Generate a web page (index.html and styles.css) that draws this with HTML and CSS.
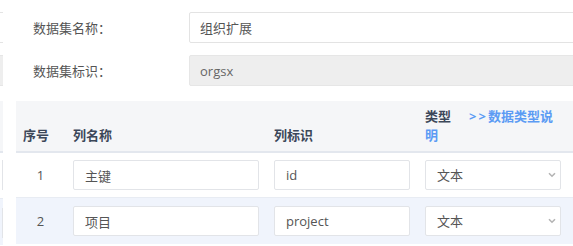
FILE: index.html
```html
<!DOCTYPE html>
<html lang="zh-CN">
<head>
<meta charset="utf-8">
<title>数据集</title>
<link rel="stylesheet" href="styles.css">
</head>
<body>
<div class="page">
  <div class="strip">
    <div class="s-gap12"></div>
    <div class="s-input"></div>
    <div class="s-gap12"></div>
    <div class="s-disabled"></div>
    <div class="s-gap15"></div>
    <div class="s-head"></div>
    <div class="s-row"><div class="s-edge"></div></div>
    <div class="s-row s-alt"><div class="s-edge"></div></div>
  </div>
  <div class="main">
    <div class="meta">
      <div class="field">
        <label class="field-label">数据集名称：</label>
        <input class="field-input" type="text" value="组织扩展">
      </div>
      <div class="field">
        <label class="field-label">数据集标识：</label>
        <input class="field-input is-disabled" type="text" value="orgsx" disabled>
      </div>
    </div>
    <div class="grid">
      <div class="grid-head">
        <div class="hcell c-no">序号</div>
        <div class="hcell c-name">列名称</div>
        <div class="hcell c-id">列标识</div>
        <div class="hcell c-type"><span class="type-label">类型</span><a class="type-link"><span class="arrows">&gt;&gt;</span>数据类型说<br>明</a></div>
      </div>
      <div class="grid-row">
        <div class="cell c-no num">1</div>
        <div class="cell c-name"><input class="cell-input w-name" type="text" value="主键"></div>
        <div class="cell c-id"><input class="cell-input w-id" type="text" value="id"></div>
        <div class="cell c-type">
          <div class="select-wrap">
            <select class="cell-select"><option>文本</option></select>
            <svg class="chev" width="8" height="6" viewBox="0 0 8 6"><path d="M1 1.2 L4 4.2 L7 1.2" fill="none" stroke="#b4b4b4" stroke-width="1.6"/></svg>
          </div>
        </div>
      </div>
      <div class="grid-row alt">
        <div class="cell c-no num">2</div>
        <div class="cell c-name"><input class="cell-input w-name" type="text" value="项目"></div>
        <div class="cell c-id"><input class="cell-input w-id" type="text" value="project"></div>
        <div class="cell c-type">
          <div class="select-wrap">
            <select class="cell-select"><option>文本</option></select>
            <svg class="chev" width="8" height="6" viewBox="0 0 8 6"><path d="M1 1.2 L4 4.2 L7 1.2" fill="none" stroke="#b4b4b4" stroke-width="1.6"/></svg>
          </div>
        </div>
      </div>
    </div>
  </div>
</div>
</body>
</html>
```
FILE: styles.css
```css
* { box-sizing: border-box; }
html, body {
  margin: 0;
  padding: 0;
  background: #ffffff;
  overflow: hidden;
}
body {
  font-family: "Open Sans", "Noto Sans CJK SC", sans-serif;
  font-size: 13px;
  color: #555;
  width: 573px;
  height: 246px;
}
.page {
  display: flex;
  width: 573px;
  height: 246px;
  overflow: hidden;
}

/* left clipped strip */
.strip {
  width: 3px;
  flex: 0 0 3px;
  display: flex;
  flex-direction: column;
}
.s-gap12 { height: 12px; }
.s-gap15 { height: 15px; }
.s-input {
  height: 31px;
  border-top: 1px solid #e4e4e4;
  border-bottom: 1px solid #e4e4e4;
}
.s-disabled {
  height: 31px;
  background: #eeeeee;
  border-top: 1px solid #e6e6e6;
  border-bottom: 1px solid #e6e6e6;
}
.s-head {
  height: 52px;
  background: #f5f6f8;
  border-bottom: 2px solid #e3e7ee;
}
.s-row {
  height: 46px;
  padding-top: 7px;
  border-bottom: 1px solid #e8ecf3;
}
.s-alt { background: #f0f4fc; border-bottom: 0; padding-top: 9px; }
.s-edge {
  width: 3px;
  height: 30px;
  border-right: 1px solid #e2e4e8;
}

/* main */
.main {
  flex: 1 1 auto;
  min-width: 0;
}
.meta {
  padding-top: 12px;
}
.field {
  display: flex;
  align-items: center;
  height: 31px;
  margin-bottom: 12px;
}
.field + .field { margin-bottom: 15px; }
.field-label {
  width: 186px;
  flex: 0 0 186px;
  padding-left: 30px;
  color: #555;
  font-size: 13px;
}
.field-input {
  flex: 0 0 420px;
  height: 31px;
  border: 1px solid #e3e3e3;
  border-radius: 2px;
  padding: 0 10px;
  font-family: inherit;
  font-size: 13px;
  color: #555;
  background: #fff;
  outline: none;
}
.field-input.is-disabled {
  background: #eeeeee;
  color: #666;
  border-color: #e6e6e6;
}

/* table grid */
.grid {
  margin-left: 13px;
  width: 557px;
}
.grid-head, .grid-row {
  display: grid;
  grid-template-columns: 49px 201px 151px 156px;
}
.grid-head {
  background: #f5f6f8;
  border-bottom: 2px solid #e3e7ee;
  align-items: end;
}
.hcell {
  padding: 6px 0 6px 8px;
  line-height: 19px;
  font-weight: bold;
  color: #3c4759;
  font-size: 13px;
}
.hcell.c-no { padding-left: 7px; }
.type-link {
  margin-left: 18px;
  color: #5b9bf4;
  font-weight: bold;
  text-decoration: none;
}
.arrows { letter-spacing: 2px; }

.grid-row {
  align-items: center;
  border-bottom: 1px solid #e8ecf3;
}
.grid-row.alt {
  background: #f0f4fc;
  border-bottom: 0;
}
.cell {
  padding: 7px 0 7px 8px;
}
.grid-row.alt .cell { padding-top: 8px; padding-bottom: 8px; }
.cell.num {
  padding-left: 0;
  text-align: center;
  color: #555;
  font-size: 13px;
}
.cell-input {
  display: block;
  height: 30px;
  border: 1px solid #e2e4e8;
  border-radius: 2px;
  background: #fff;
  padding: 0 11px;
  font-family: inherit;
  font-size: 13px;
  color: #555;
  outline: none;
}
.w-name { width: 186px; }
.w-id { width: 136px; }
.select-wrap {
  position: relative;
  width: 136px;
}
.cell-select {
  display: block;
  width: 136px;
  height: 30px;
  border: 1px solid #e2e4e8;
  border-radius: 2px;
  background: #fff;
  padding: 0 11px;
  font-family: inherit;
  font-size: 13px;
  color: #555;
  -webkit-appearance: none;
  appearance: none;
  outline: none;
}
.chev {
  position: absolute;
  right: 5px;
  top: 12px;
}
```
